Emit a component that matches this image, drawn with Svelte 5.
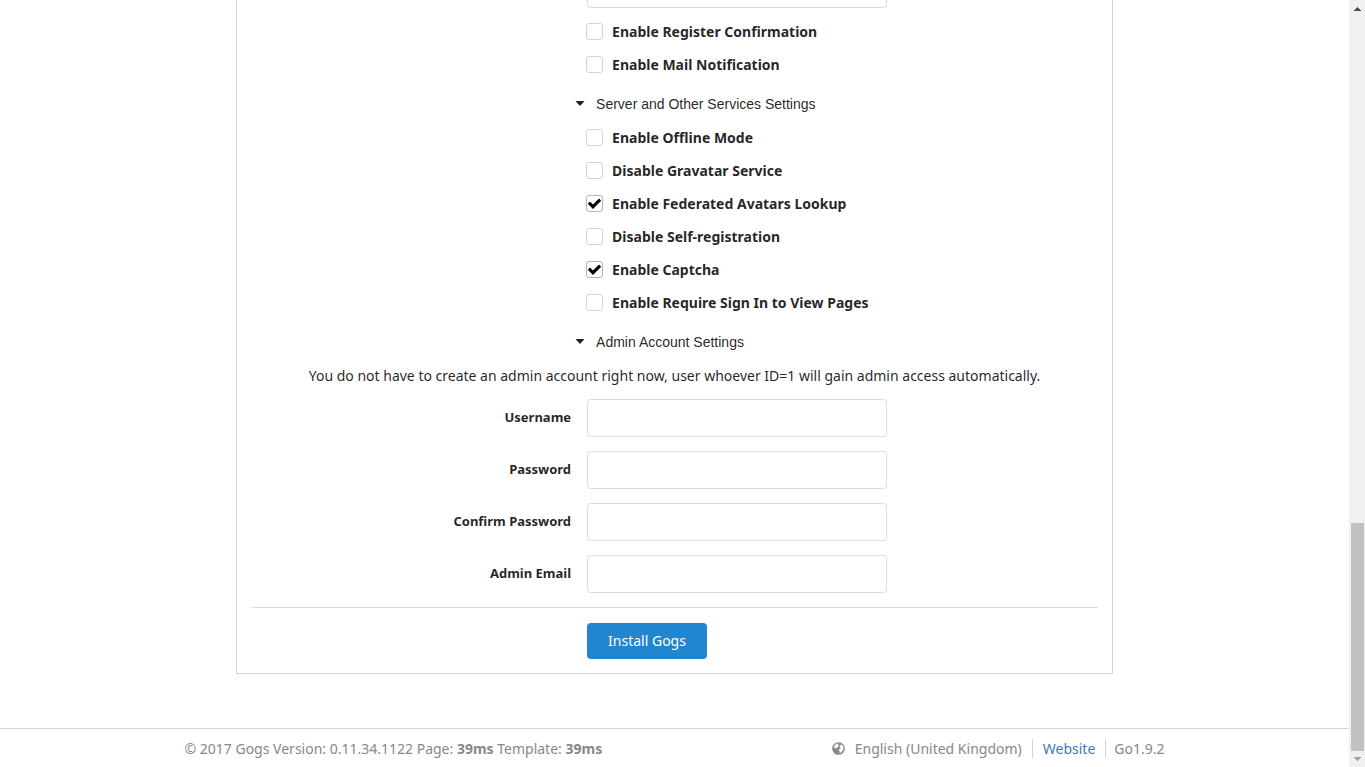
<script>
  const mailOptions = [
    { id: 'register_confirm', label: 'Enable Register Confirmation', checked: false },
    { id: 'mail_notify', label: 'Enable Mail Notification', checked: false }
  ];
  const serverOptions = [
    { id: 'offline_mode', label: 'Enable Offline Mode', checked: false },
    { id: 'disable_gravatar', label: 'Disable Gravatar Service', checked: false },
    { id: 'federated_avatar', label: 'Enable Federated Avatars Lookup', checked: true },
    { id: 'disable_registration', label: 'Disable Self-registration', checked: false },
    { id: 'enable_captcha', label: 'Enable Captcha', checked: true },
    { id: 'require_sign_in', label: 'Enable Require Sign In to View Pages', checked: false }
  ];
  const adminFields = [
    { id: 'admin_name', label: 'Username', type: 'text' },
    { id: 'admin_passwd', label: 'Password', type: 'password' },
    { id: 'admin_confirm_passwd', label: 'Confirm Password', type: 'password' },
    { id: 'admin_email', label: 'Admin Email', type: 'email' }
  ];
</script>

{#snippet option(item)}
  <div class="option">
    <span class="box">
      <input type="checkbox" id={item.id} checked={item.checked} />
      <svg viewBox="0 0 1792 1792" aria-hidden="true">
        <path d="M1671 566q0 40-28 68l-724 724-136 136q-28 28-68 28t-68-28l-136-136-362-362q-28-28-28-68t28-68l136-136q28-28 68-28t68 28l294 295 656-657q28-28 68-28t68 28l136 136q28 28 28 68z" />
      </svg>
    </span>
    <label for={item.id}>{item.label}</label>
  </div>
{/snippet}

{#snippet title(text)}
  <button type="button" class="title">
    <svg viewBox="0 0 10 5" aria-hidden="true"><path d="M0.5 0h9L5 5z" /></svg>
    {text}
  </button>
{/snippet}

<div class="window">
  <div class="page">
    <main class="panel">
      <form>
        <div class="field">
          <span></span>
          <input type="password" aria-label="Sender password" />
        </div>
        {#each mailOptions as item}{@render option(item)}{/each}
        {@render title('Server and Other Services Settings')}
        {#each serverOptions as item}{@render option(item)}{/each}
        {@render title('Admin Account Settings')}
        <p>You do not have to create an admin account right now, user whoever ID=1 will gain admin access automatically.</p>
        {#each adminFields as f}
          <div class="field">
            <label for={f.id}>{f.label}</label>
            <input id={f.id} type={f.type} />
          </div>
        {/each}
        <hr />
        <div class="actions">
          <button type="submit" class="primary">Install Gogs</button>
        </div>
      </form>
    </main>
    <footer>
      <div class="container">
        <div>© 2017 Gogs Version: 0.11.34.1122 Page: <strong>39ms</strong> Template: <strong>39ms</strong></div>
        <div class="links">
          <button type="button" class="language">
            <svg viewBox="0 0 13 13" aria-hidden="true">
              <circle cx="6.500" cy="6.500" r="6.300" />
              <path class="land" d="M2.600 3.400 4.300 1.700l2.500.1-1 1.100 1.200.8-1.300 1.500-1.400.5.300.5-1 .3-1.700-1.300zM7.500 5l.6-1.700 1.700-.8 1.500 2 .3 2-1 2.200-1.700 1.800-1.500.5.4-1.500-1-1.200.5-1.200 1.400-.3z" />
            </svg>
            English (United Kingdom)
          </button>
          <a href="#website">Website</a>
          <span class="version">Go1.9.2</span>
        </div>
      </div>
    </footer>
  </div>
  <div class="scrollbar" aria-hidden="true">
    <svg viewBox="0 0 16 17"><path fill="#505050" d="M8 7h1v1h1v1h1v1h1v1H5v-1h1V9h1V8h1z" /></svg>
    <div class="track"><div class="thumb"></div></div>
    <svg viewBox="0 0 16 16"><path fill="#a3a3a3" d="M5 6h7v1h-1v1h-1v1H9v1H8V9H7V8H6V7H5z" /></svg>
  </div>
</div>

<style>
  :global(body) {
    background: #fff;
    color: rgba(0, 0, 0, 0.87);
    font: 14px/19px 'Noto Sans', sans-serif;
  }
  .window {
    display: flex;
    height: 100vh;
    overflow: hidden;
  }
  .page {
    flex: 1;
    min-width: 0;
    display: flex;
    flex-direction: column;
    justify-content: flex-end;
  }
  .panel {
    box-sizing: border-box;
    width: 65%;
    margin: 0 auto 54px;
    padding: 14px;
    border: 1px solid #d4d4d5;
  }
  form {
    display: flex;
    flex-direction: column;
    gap: 14px;
  }
  .field {
    display: grid;
    grid-template-columns: 320px 300px;
    gap: 16px;
  }
  .field label {
    padding-top: 9px;
    text-align: right;
    font-size: 13px;
    font-weight: 700;
  }
  .field input {
    box-sizing: border-box;
    width: 100%;
    height: 38px;
    padding: 0 14px;
    border: 1px solid rgba(34, 36, 38, 0.15);
    border-radius: 4px;
    font: inherit;
    outline: none;
  }
  .option {
    display: flex;
    align-items: center;
    gap: 9px;
    padding-left: 335px;
    font-weight: 700;
  }
  .box {
    display: grid;
    width: 17px;
    height: 17px;
  }
  .box > * {
    grid-area: 1 / 1;
  }
  .box input {
    appearance: none;
    box-sizing: border-box;
    width: 17px;
    height: 17px;
    margin: 0;
    border: 1px solid #d4d4d5;
    border-radius: 3px;
  }
  .box input:checked {
    border-color: rgba(34, 36, 38, 0.35);
  }
  .box svg {
    display: none;
    width: 15px;
    height: 15px;
    place-self: center;
    pointer-events: none;
  }
  .box input:checked + svg {
    display: block;
  }
  .title {
    display: flex;
    align-items: center;
    gap: 11px;
    margin: 7px 0 0;
    padding: 0 0 0 324px;
    border: 0;
    background: none;
    color: inherit;
    font: 14px/19px 'Liberation Sans', sans-serif;
    text-align: left;
  }
  .title svg {
    width: 10px;
    height: 5px;
    margin-bottom: 3px;
    fill: currentColor;
  }
  p {
    margin: 0;
    text-align: center;
  }
  hr {
    width: 100%;
    margin: 0;
    border: 0;
    border-top: 1px solid #dededf;
  }
  .actions {
    margin-top: 1px;
    padding-left: 336px;
  }
  .primary {
    display: block;
    height: 36px;
    padding: 0 21px 1px;
    border: 0;
    border-radius: 4px;
    background: #2185d0;
    color: #fff;
    font: inherit;
  }
  footer {
    border-top: 1px solid #d4d4d5;
    color: #888;
  }
  .container {
    display: flex;
    justify-content: space-between;
    max-width: 980px;
    margin: 0 auto;
    padding: 10px 0 9px;
  }
  .links {
    display: flex;
  }
  .language {
    display: flex;
    align-items: center;
    gap: 10px;
    padding: 0 10px 0 0;
    border: 0;
    background: none;
    color: inherit;
    font: inherit;
  }
  .language svg {
    width: 13px;
    height: 13px;
    fill: #888;
  }
  .language .land {
    fill: #fff;
  }
  .links a {
    padding: 0 10px;
    border-left: 1px solid #d4d4d5;
    color: #4078c0;
    text-decoration: none;
  }
  .version {
    padding-left: 8px;
    border-left: 1px solid #d4d4d5;
  }
  .scrollbar {
    display: flex;
    flex-direction: column;
    width: 16px;
    background: #f0f0f0;
  }
  .scrollbar svg {
    display: block;
    width: 16px;
  }
  .track {
    flex: 1;
    display: flex;
    flex-direction: column;
    justify-content: flex-end;
    padding: 0 1px 0 2px;
  }
  .thumb {
    height: 31%;
    background: #c1c1c1;
  }
</style>
